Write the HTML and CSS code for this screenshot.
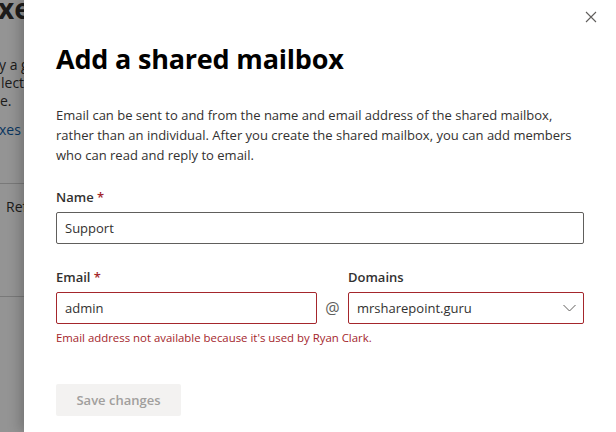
FILE: index.html
```html
<!DOCTYPE html>
<html>
<head>
<meta charset="utf-8">
<link rel="stylesheet" href="styles.css">
</head>
<body>
<div class="page">
  <div class="page-title">xes</div>
  <p class="page-text"><span class="l1">y a g</span><br><span class="l2">lect</span><br><span class="l3">e.</span></p>
  <p class="page-link">xes</p>
  <div class="page-bar"><span>Ref</span></div>
</div>
<div class="scrim"></div>
<div class="panel">
  <button class="close" aria-label="Close">
    <svg width="12" height="12" viewBox="0 0 12 12"><path d="M1 1 L11 11 M11 1 L1 11" stroke="#605e5c" stroke-width="1.1" fill="none"/></svg>
  </button>
  <h1 class="title">Add a shared mailbox</h1>
  <p class="desc">Email can be sent to and from the name and email address of the shared mailbox, rather than an individual. After you create the shared mailbox, you can add members who can read and reply to email.</p>
  <div class="field">
    <label class="label">Name <span class="req">*</span></label>
    <div class="input">Support</div>
  </div>
  <div class="row">
    <div class="field email">
      <label class="label">Email <span class="req">*</span></label>
      <div class="input error">admin</div>
    </div>
    <div class="at">@</div>
    <div class="field domains">
      <label class="label">Domains</label>
      <div class="input error select">
        <span>mrsharepoint.guru</span>
        <svg width="13" height="8" viewBox="0 0 13 8"><path d="M0.5 1 L6.5 7 L12.5 1" stroke="#605e5c" stroke-width="1" fill="none"/></svg>
      </div>
    </div>
  </div>
  <div class="errmsg">Email address not available because it's used by Ryan Clark.</div>
  <button class="save">Save changes</button>
</div>
</body>
</html>
```

FILE: styles.css
```css
* { box-sizing: border-box; }
html, body { margin: 0; padding: 0; }
body {
  width: 616px;
  height: 432px;
  overflow: hidden;
  position: relative;
  background: #fff;
  font-family: "Open Sans", "Noto Sans", sans-serif;
  color: #323130;
}
.page { width: 616px; height: 432px; overflow: hidden; }
.page-title { font-weight: 700; font-size: 28px; line-height: 36px; margin-top: -10px; margin-left: -2px; height: 36px; white-space: nowrap; }
.page-text { margin: 30px 0 0 0; font-size: 14px; line-height: 18px; color: #323130; white-space: nowrap; }
.page-text .l1 { margin-left: -1px; }
.page-text .l2 { margin-left: 1px; }
.page-link { margin: 11px 0 0 -1px; font-size: 14px; line-height: 18px; color: #0f5ea8; }
.page-bar { margin-top: 44px; border-top: 1px solid #d0d0d0; border-bottom: 1px solid #d0d0d0; height: 114px; padding: 14px 0 0 6px; font-size: 14px; line-height: 18px; }
.scrim { position: absolute; inset: 0; background: rgba(0,0,0,0.42); }
.panel {
  position: absolute;
  top: 0; bottom: 0; left: 24px; right: 0;
  background: #fff;
  box-shadow: -4px 0 12px rgba(0,0,0,0.22);
  padding: 40px 32px 0 32px;
}
.close {
  position: absolute; top: 11px; right: 19px;
  width: 12px; height: 12px; padding: 0; border: 0; background: none; display: flex;
}
.title { margin: 0; font-size: 27px; font-weight: 700; line-height: 38px; color: #000; letter-spacing: -0.2px; }
.desc { margin: 27px 0 0 0; font-size: 13px; line-height: 20px; color: #323130; }
.field { display: flex; flex-direction: column; }
.label { font-size: 13px; font-weight: 600; line-height: 20px; margin-top: 22px; margin-bottom: 5px; color: #323130; }
.row .label { margin-top: 23px; }
.req { color: #a4262c; }
.input {
  height: 32px; border: 1px solid #605e5c; border-radius: 2px;
  padding: 0 8px; font-size: 13px; line-height: 30px; color: #323130;
}
.input.error { border-color: #a4262c; }
.row { display: flex; align-items: flex-end; gap: 0; }
.email { width: 261px; }
.at { width: 31px; height: 32px; line-height: 32px; text-align: center; font-size: 16px; color: #605e5c; }
.domains { flex: 1; }
.select { display: flex; justify-content: space-between; align-items: center; padding-right: 7px; }
.errmsg { font-size: 11.4px; color: #a4262c; line-height: 16px; margin-top: 6px; }
.save {
  margin-top: 38px; width: 125px; height: 32px; border: 0; border-radius: 2px;
  background: #f3f2f1; color: #a19f9d; font-family: inherit; font-size: 13px; font-weight: 600;
}
```
